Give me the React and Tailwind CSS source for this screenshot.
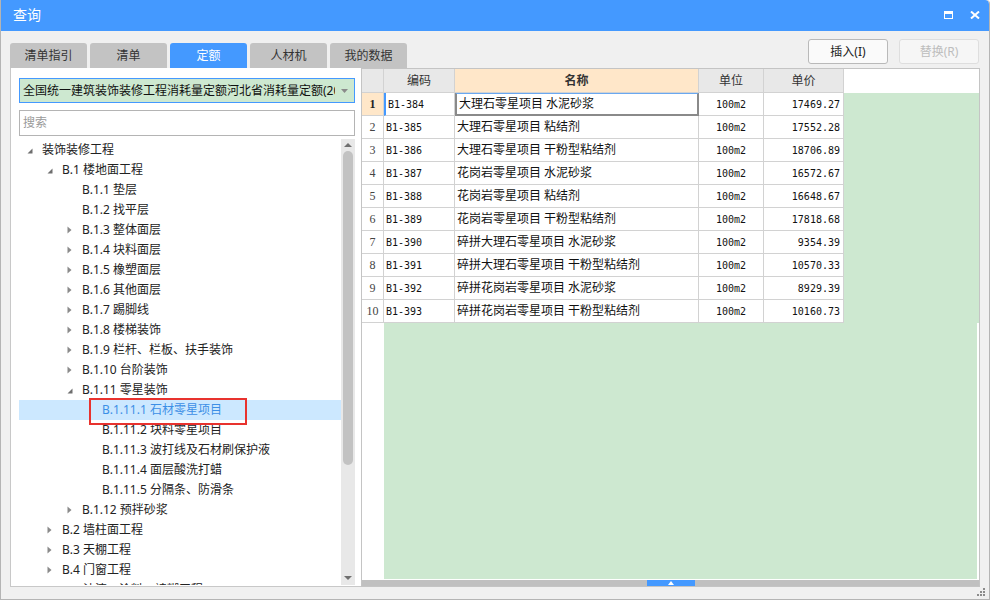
import React from 'react';

const FONT = "font-['Noto_Sans','Noto_Sans_CJK_SC',sans-serif]";
const MONO = "font-['DejaVu_Sans_Mono','Noto_Sans_CJK_SC',monospace]";

const tabs = ['清单指引', '清单', '定额', '人材机', '我的数据'];

const tree = [
  [0, 'open', '装饰装修工程'],
  [1, 'open', 'B.1 楼地面工程'],
  [2, 'leaf', 'B.1.1 垫层'],
  [2, 'leaf', 'B.1.2 找平层'],
  [2, 'closed', 'B.1.3 整体面层'],
  [2, 'closed', 'B.1.4 块料面层'],
  [2, 'closed', 'B.1.5 橡塑面层'],
  [2, 'closed', 'B.1.6 其他面层'],
  [2, 'closed', 'B.1.7 踢脚线'],
  [2, 'closed', 'B.1.8 楼梯装饰'],
  [2, 'closed', 'B.1.9 栏杆、栏板、扶手装饰'],
  [2, 'closed', 'B.1.10 台阶装饰'],
  [2, 'open', 'B.1.11 零星装饰'],
  [3, 'leaf', 'B.1.11.1 石材零星项目', true],
  [3, 'leaf', 'B.1.11.2 块料零星项目'],
  [3, 'leaf', 'B.1.11.3 波打线及石材刷保护液'],
  [3, 'leaf', 'B.1.11.4 面层酸洗打蜡'],
  [3, 'leaf', 'B.1.11.5 分隔条、防滑条'],
  [2, 'closed', 'B.1.12 预拌砂浆'],
  [1, 'closed', 'B.2 墙柱面工程'],
  [1, 'closed', 'B.3 天棚工程'],
  [1, 'closed', 'B.4 门窗工程'],
  [1, 'closed', 'B.5 油漆、涂料、裱糊工程'],
];

const indent = ['w-0', 'w-[20px]', 'w-[40px]', 'w-[60px]'];

const rows = [
  ['B1-384', '大理石零星项目 水泥砂浆', '17469.27'],
  ['B1-385', '大理石零星项目 粘结剂', '17552.28'],
  ['B1-386', '大理石零星项目 干粉型粘结剂', '18706.89'],
  ['B1-387', '花岗岩零星项目 水泥砂浆', '16572.67'],
  ['B1-388', '花岗岩零星项目 粘结剂', '16648.67'],
  ['B1-389', '花岗岩零星项目 干粉型粘结剂', '17818.68'],
  ['B1-390', '碎拼大理石零星项目 水泥砂浆', '9354.39'],
  ['B1-391', '碎拼大理石零星项目 干粉型粘结剂', '10570.33'],
  ['B1-392', '碎拼花岗岩零星项目 水泥砂浆', '8929.39'],
  ['B1-393', '碎拼花岗岩零星项目 干粉型粘结剂', '10160.73'],
];

function Arrow({ kind }) {
  if (kind === 'open') {
    return (
      <svg width="6" height="6" viewBox="0 0 6 6" className="mt-[1px]">
        <path d="M5.5 0.5 L5.5 5.5 L0.5 5.5 Z" fill="#6f6f6f" />
      </svg>
    );
  }
  if (kind === 'closed') {
    return (
      <svg width="5" height="8" viewBox="0 0 5 8">
        <path d="M0.5 0.5 L4.5 4 L0.5 7.5 Z" fill="#8a8a8a" />
      </svg>
    );
  }
  return null;
}

function TreeRow({ level, kind, label, sel }) {
  return (
    <div
      className={`flex items-center h-[20px] shrink-0 text-[12px] leading-[20px] whitespace-nowrap ${
        sel ? 'bg-[#cce8ff] text-[#3c8fe6]' : 'text-[#222222]'
      }`}
    >
      <div className={`${indent[level]} shrink-0`} />
      <div className="w-[23px] shrink-0 flex items-center pl-[8px]">
        <Arrow kind={kind} />
      </div>
      <span>{label}</span>
    </div>
  );
}

export default function App() {
  return (
    <div
      className={`${FONT} w-[990px] h-[600px] bg-[#f0f0f0] border-l border-r border-b border-[#b4b4b4] rounded-tr-[4px] flex flex-col overflow-hidden`}
    >
      {/* Title bar */}
      <div className="h-[31px] shrink-0 bg-[#4499ff] rounded-tr-[4px] flex items-center pl-[12px] pr-[9px] text-white">
        <span className="text-[14px] leading-[20px] -mt-[1px]">查询</span>
        <div className="ml-auto flex items-center gap-[17px] -mt-[2px]">
          <div className="w-[9px] h-[8px] border-[1.5px] border-t-[3px] border-white" />
          <svg width="10" height="8" viewBox="0 0 10 8">
            <path d="M1 0.5 L9 7.5 M9 0.5 L1 7.5" stroke="#fff" strokeWidth="2" />
          </svg>
        </div>
      </div>

      {/* Tabs + buttons */}
      <div className="h-[37px] shrink-0 flex pl-[9px] pr-[10px]">
        <div className="flex items-end gap-[3px]">
          {tabs.map((t) => (
            <div
              key={t}
              className={`w-[77px] h-[25px] rounded-t-[3px] flex items-center justify-center text-[12px] ${
                t === '定额' ? 'bg-[#4499ff] text-white' : 'bg-[#c3c3c3] text-[#333333]'
              }`}
            >
              {t}
            </div>
          ))}
        </div>
        <div className="ml-auto flex gap-[11px] pt-[8px]">
          <div className="w-[80px] h-[25px] rounded-[3px] border border-[#b9b9b9] bg-[#fafafa] flex items-center justify-center text-[12px] text-[#222222]">
            插入(I)
          </div>
          <div className="w-[80px] h-[25px] rounded-[3px] border border-[#dedede] bg-[#f6f6f6] flex items-center justify-center text-[12px] text-[#bdbdbd]">
            替换(R)
          </div>
        </div>
      </div>

      {/* Content */}
      <div className="h-[519px] shrink-0 flex pl-[9px]">
        {/* Left panel */}
        <div className="w-[351px] shrink-0 bg-white border-l border-b border-[#c8c8c8] flex flex-col pl-[8px] pt-[10px]">
          <div className="w-[336px] h-[25px] shrink-0 border border-[#4499ff] bg-[#cde8d0] flex items-center pl-[3px] pr-[6px]">
            <span className="flex-1 overflow-hidden whitespace-nowrap text-[12px] text-[#111111] leading-[20px]">
              全国统一建筑装饰装修工程消耗量定额河北省消耗量定额(2012)
            </span>
            <svg width="7" height="4" viewBox="0 0 7 4" className="ml-[6px] shrink-0">
              <path d="M0 0 L7 0 L3.5 4 Z" fill="#8a8a8a" />
            </svg>
          </div>
          <div className="w-[336px] h-[26px] shrink-0 mt-[7px] border border-[#b4b4b4] bg-white flex items-center pl-[3px] text-[12px] text-[#9a9a9a]">
            搜索
          </div>
          <div className="mt-[3px] h-[446px] flex">
            <div className="relative w-[322px] h-[446px] pt-[1px] flex flex-col overflow-hidden">
              {tree.map(([l, k, t, s], i) => (
                <TreeRow key={i} level={l} kind={k} label={t} sel={s} />
              ))}
              <div className="absolute left-[70px] top-[259px] w-[158px] h-[27px] border-2 border-[#e8322e]" />
            </div>
            <div className="w-[14px] h-[446px] bg-[#e8e8e8] flex flex-col items-center">
              <svg width="8" height="4" viewBox="0 0 8 4" className="mt-[4px] shrink-0">
                <path d="M0 4 L4 0 L8 4 Z" fill="#707070" />
              </svg>
              <div className="w-[10px] h-[314px] mt-[4px] bg-[#c2c2c2] rounded-[5px] shrink-0" />
              <svg width="8" height="4" viewBox="0 0 8 4" className="mt-auto mb-[5px] shrink-0">
                <path d="M0 0 L8 0 L4 4 Z" fill="#707070" />
              </svg>
            </div>
          </div>
        </div>

        {/* Right pane */}
        <div className="w-[619px] shrink-0 border border-[#c4c4c4] bg-white flex flex-col">
          {/* header */}
          <div className="h-[24px] shrink-0 flex bg-white text-[12px] text-[#333333]">
            <div className="w-[22px] border-r border-b border-[#d2d2d2] bg-[#e8e8e8]" />
            <div className="w-[71px] border-r border-b border-[#d2d2d2] bg-[#e8e8e8] flex items-center justify-center">编码</div>
            <div className="w-[244px] border-r border-b border-[#d2d2d2] bg-[#ffe7c9] flex items-center justify-center font-bold">名称</div>
            <div className="w-[65px] border-r border-b border-[#d2d2d2] bg-[#e8e8e8] flex items-center justify-center">单位</div>
            <div className="w-[80px] border-r border-b border-[#d2d2d2] bg-[#e8e8e8] flex items-center justify-center">单价</div>
          </div>
          {/* body */}
          <div className="flex-1 flex flex-col bg-[#cde8d0]">
            {rows.map(([code, name, price], i) => {
              const first = i === 0;
              return (
                <div key={code} className="h-[23px] shrink-0 flex w-[482px] bg-white">
                  <div
                    className={`w-[22px] border-r border-b border-[#d2d2d2] flex items-center justify-center font-['Liberation_Serif',serif] text-[12px] ${
                      first ? 'bg-[#ffe7c9] font-bold text-[#222222]' : 'text-[#444444]'
                    }`}
                  >
                    {i + 1}
                  </div>
                  <div
                    className={`w-[71px] border-r border-b border-[#d2d2d2] flex items-center ${MONO} text-[10px] text-[#111111] pl-[2px] ${
                      first ? 'border-l-2 border-l-[#4499ff] pl-0' : ''
                    }`}
                  >
                    {code}
                  </div>
                  <div
                    className={`w-[244px] flex items-center text-[12px] text-[#111111] whitespace-pre pl-[2px] ${
                      first
                        ? 'border-2 border-[#8a8a8a] border-t-[#6aa8f0] border-t'
                        : 'border-r border-b border-[#d2d2d2]'
                    }`}
                  >
                    {name}
                  </div>
                  <div className={`w-[65px] border-r border-b border-[#d2d2d2] flex items-center justify-center ${MONO} text-[10px] text-[#111111]`}>
                    100m2
                  </div>
                  <div className={`w-[80px] border-r border-b border-[#d2d2d2] flex items-center justify-end pr-[3px] ${MONO} text-[10px] text-[#111111]`}>
                    {price}
                  </div>
                </div>
              );
            })}
            <div className="flex-1 flex">
              <div className="w-[22px] bg-white" />
              <div className="flex-1 border-r-2 border-white" />
            </div>
          </div>
          {/* splitter / scrollbar */}
          <div className="h-[7px] shrink-0 border-t border-white bg-[#c0c0c0] flex justify-center">
            <div className="w-[48px] h-full bg-[#4499ff] flex items-center justify-center">
              <svg width="6" height="4" viewBox="0 0 6 4">
                <path d="M0 4 L3 0 L6 4 Z" fill="#ffffff" />
              </svg>
            </div>
          </div>
        </div>
      </div>

      {/* Bottom bar with grip */}
      <div className="flex-1 flex justify-end items-start pr-[3px] pt-[1px]">
        <svg width="9" height="9" viewBox="0 0 9 9">
          <rect x="6" y="0" width="2" height="2" fill="#8c8c8c" />
          <rect x="3" y="3" width="2" height="2" fill="#8c8c8c" />
          <rect x="6" y="3" width="2" height="2" fill="#8c8c8c" />
          <rect x="0" y="6" width="2" height="2" fill="#8c8c8c" />
          <rect x="3" y="6" width="2" height="2" fill="#8c8c8c" />
          <rect x="6" y="6" width="2" height="2" fill="#8c8c8c" />
        </svg>
      </div>
    </div>
  );
}
